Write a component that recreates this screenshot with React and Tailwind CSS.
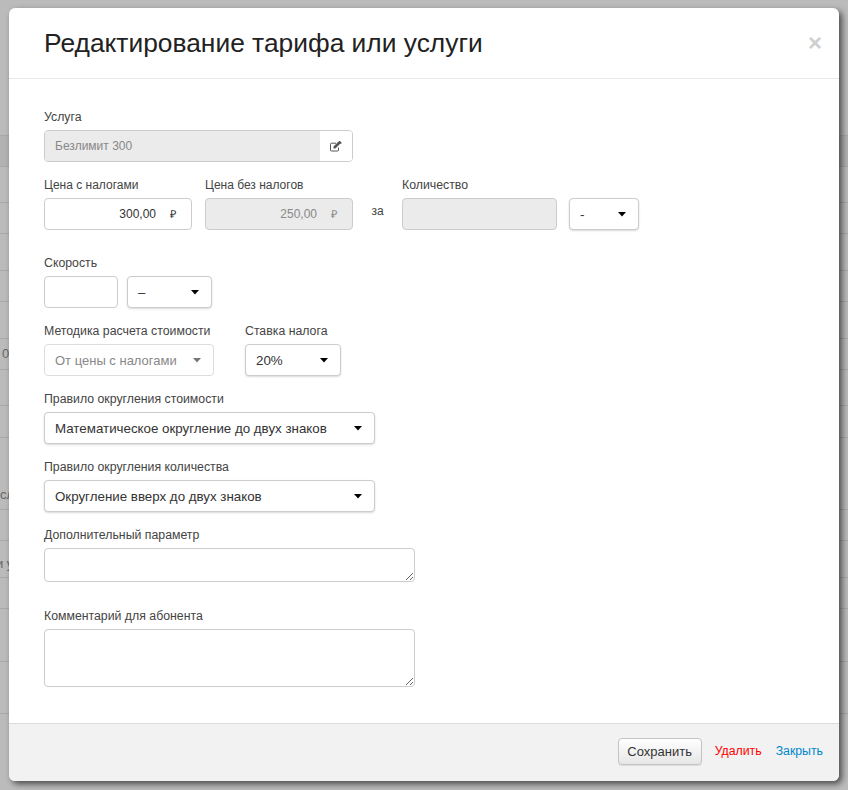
// строки таблицы за затемнением: высота и обрезанный текст
const backRows = [
  { h: 31, dark: true },
  { h: 36 },
  { h: 31 },
  { h: 37 },
  { h: 31 },
  { h: 37 },
  { h: 31, text: "0" },
  { h: 36 },
  { h: 32 },
  { h: 72, text: "сл", end: true },
  { h: 31 },
  { h: 37, text: "и у", end: true, cut: true },
  { h: 31 },
  { h: 53 },
  { h: 52 },
];

function Caret({ muted }) {
  return (
    <svg width="8" height="5" viewBox="0 0 8 5" className="shrink-0 mt-[1px]">
      <path d="M0 0h8L4 4.6z" fill={muted ? "#777777" : "#000000"} />
    </svg>
  );
}

function EditIcon() {
  return (
    <svg width="12" height="11" viewBox="0 0 12 11" className="text-[#555]">
      <path d="M8.5 6.5V9a1 1 0 0 1-1 1H1.5a1 1 0 0 1-1-1V3.2a1 1 0 0 1 1-1H6" fill="none" stroke="currentColor" strokeWidth="1" />
      <path d="M3.5 7.5V5.6L8.6 .6l1.9 1.9-5.1 5zM9.2 0l.5-.2 2 2-.2.5-.7.6-2.2-2.2z" fill="currentColor" />
    </svg>
  );
}

function Field({ label, className = "", labelSize = "text-[12.3px]", children }) {
  return (
    <div className={className}>
      <div className={`h-[22px] pb-[4px] ${labelSize} leading-[18px] text-[#444] whitespace-nowrap`}>{label}</div>
      {children}
    </div>
  );
}

function Select({ value, className = "", muted }) {
  return (
    <div
      className={`h-[32px] flex items-center justify-between pl-[10px] pr-[12px] bg-white border rounded-[4px] whitespace-nowrap ${
        muted
          ? "text-[13px] text-[#888] border-[#ddd]"
          : "text-[13.33px] text-[#333] border-[#ccc] shadow-[0_1px_2px_rgba(0,0,0,0.15)]"
      } ${className}`}
    >
      <span className="pt-[1px]">{value}</span>
      <Caret muted={muted} />
    </div>
  );
}

function MoneyInput({ value, disabled }) {
  return (
    <div
      className={`h-[32px] w-[148px] flex items-center justify-end pr-[15px] border border-[#ccc] rounded-[4px] text-[12px] ${
        disabled ? "bg-[#ebebeb] text-[#888]" : "bg-white text-[#333]"
      }`}
    >
      <span>{value}</span>
      <span className="ml-[14px] text-[11px]">₽</span>
    </div>
  );
}

function App() {
  return (
    <div className="relative h-screen overflow-hidden bg-[#bbbbbb] font-['Liberation_Sans',Arial,sans-serif]">

      {/* таблица за модальным окном */}
      <div className="pt-[135px]">
        <div className="border-t border-[#a8a8a8]"></div>
        {backRows.map((row, i) => (
          <div
            key={i}
            style={{ height: row.h }}
            className={`flex text-[13px] text-[#666] border-b border-[#a8a8a8] whitespace-nowrap ${row.dark ? "bg-[#b2b2b2]" : ""} ${
              row.end ? "items-end" : "items-center pl-[2px]"
            } ${row.end && !row.cut ? "pb-[5px]" : ""} ${row.cut ? "pb-[4px] pl-0" : ""}`}
          >
            <span className={row.cut ? "-ml-[4px]" : ""}>{row.text}</span>
          </div>
        ))}
      </div>

      {/* модальное окно */}
      <div className="absolute left-[9px] top-[8px] w-[830px] h-[773px] flex flex-col bg-white rounded-[6px] shadow-[3px_3px_6px_rgba(0,0,0,0.6)]">

        <div className="h-[71px] shrink-0 flex items-center justify-between pl-[35px] pr-[17px] border-b border-[#e8e8e8]">
          <h1 className="text-[26.36px] leading-[30px] text-[#222] pb-[1px]">Редактирование тарифа или услуги</h1>
          <span className="text-[24px] font-bold leading-none text-[#cfcfcf]">×</span>
        </div>

        <div className="flex-1 pl-[35px] pt-[29px]">

          <Field label="Услуга">
            <div className="h-[32px] w-[309px] flex border border-[#ccc] rounded-[4px] overflow-hidden text-[12px]">
              <div className="flex-1 flex items-center pl-[10px] bg-[#ebebeb] text-[#888]">Безлимит 300</div>
              <div className="w-[32px] flex items-center justify-center bg-white">
                <EditIcon />
              </div>
            </div>
          </Field>

          <div className="mt-[14px] flex">
            <Field label="Цена с налогами" labelSize="text-[12px]">
              <MoneyInput value="300,00" />
            </Field>
            <Field label="Цена без налогов" labelSize="text-[12px]" className="ml-[13px]">
              <MoneyInput value="250,00" disabled />
            </Field>
            <div className="w-[49px] pt-[26px] text-center text-[12px] text-[#444]">за</div>
            <Field label="Количество">
              <div className="h-[32px] w-[155px] bg-[#ebebeb] border border-[#ccc] rounded-[4px]"></div>
            </Field>
            <div className="ml-[12px] pt-[22px]">
              <Select value="-" className="w-[70px]" />
            </div>
          </div>

          <div className="mt-[24px]">
            <Field label="Скорость">
              <div className="flex gap-[9px]">
                <div className="h-[32px] w-[74px] bg-white border border-[#ccc] rounded-[4px]"></div>
                <Select value="–" className="w-[85px]" />
              </div>
            </Field>
          </div>

          <div className="mt-[14px] flex gap-[31px]">
            <Field label="Методика расчета стоимости">
              <Select value="От цены с налогами" className="w-[170px]" muted />
            </Field>
            <Field label="Ставка налога">
              <Select value="20%" className="w-[96px]" />
            </Field>
          </div>

          <Field label="Правило округления стоимости" className="mt-[14px]">
            <Select value="Математическое округление до двух знаков" className="w-[331px]" />
          </Field>

          <Field label="Правило округления количества" className="mt-[14px]">
            <Select value="Округление вверх до двух знаков" className="w-[331px]" />
          </Field>

          <Field label="Дополнительный параметр" className="mt-[14px]">
            <textarea className="block h-[34px] w-[371px] bg-white border border-[#ccc] rounded-[4px]"></textarea>
          </Field>

          <Field label="Комментарий для абонента" className="mt-[25px]">
            <textarea className="block h-[58px] w-[371px] bg-white border border-[#ccc] rounded-[4px]"></textarea>
          </Field>
        </div>

        <div className="h-[58px] shrink-0 flex items-center justify-end pr-[16px] pb-[2px] bg-[#f2f2f2] border-t border-[#dcdcdc] rounded-b-[6px] text-[12.3px]">
          <button className="h-[27px] w-[84px] border border-[#c4c4c4] rounded-[4px] bg-gradient-to-b from-white to-[#e6e6e6] text-[13px] text-[#333] shadow-[0_1px_1px_rgba(0,0,0,0.1)]">
            Сохранить
          </button>
          <a className="ml-[13px] text-[#ff0000]">Удалить</a>
          <a className="ml-[14px] text-[#0088cc]">Закрыть</a>
        </div>
      </div>
    </div>
  );
}

export default App;
